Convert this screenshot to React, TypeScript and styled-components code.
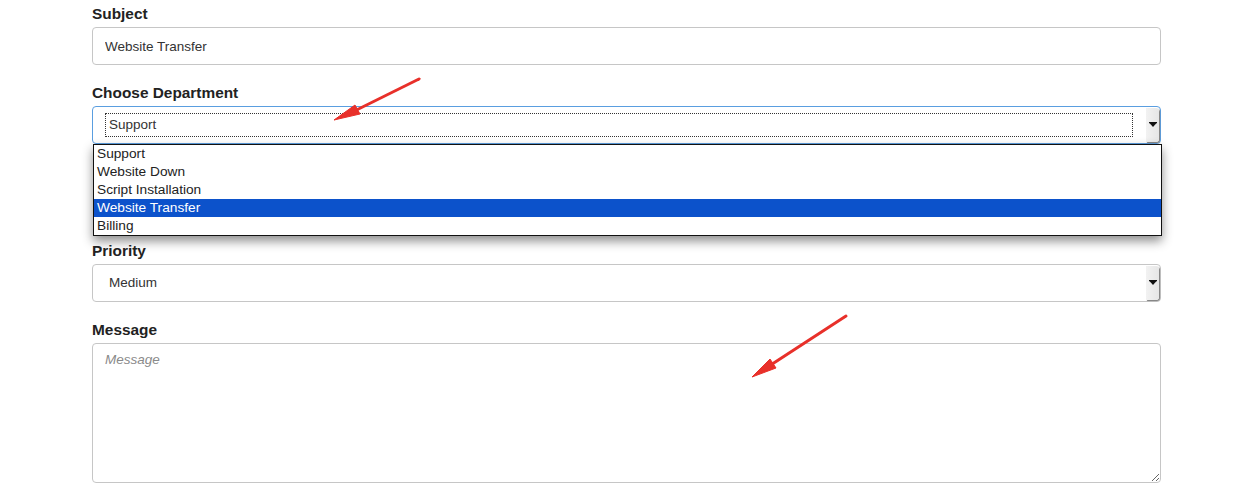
import React from "react";
import styled, { createGlobalStyle } from "styled-components";

const GlobalStyle = createGlobalStyle`
	html, body {
		margin: 0;
		padding: 0;
		background: #fff;
	}
	body {
		font-family: "Liberation Sans", Arial, sans-serif;
		color: #222;
	}
`;

const colors = {
	label: "#222",
	border: "#c6c6c6",
	focus: "#5a9ee0",
	highlight: "#0c52cb",
	arrow: "#e8302a",
	placeholder: "#8a8a8a",
};

const Page = styled.div`
	position: relative;
	width: 1247px;
	height: 494px;
	overflow: hidden;
`;

const Form = styled.form`
	width: 1069px;
	padding: 4px 0 0 92px;
`;

// $covered: room for the row that the open drop-down list lies over
const Field = styled.div<{ $covered?: boolean }>`
	margin-bottom: ${({ $covered }) => ($covered ? "97px" : "18px")};
`;

const Label = styled.label`
	display: block;
	font-size: 15.4px;
	font-weight: bold;
	line-height: 20px;
	color: ${colors.label};
	margin-bottom: 3px;
`;

const TextInput = styled.input`
	box-sizing: border-box;
	display: block;
	width: 100%;
	height: 38px;
	padding: 0 12px;
	border: 1px solid ${colors.border};
	border-radius: 4px;
	font-family: inherit;
	font-size: 13.5px;
	color: #333;
	outline: none;
`;

const SelectBox = styled.div<{ $focused?: boolean }>`
	position: relative;
	box-sizing: border-box;
	display: flex;
	align-items: center;
	height: 38px;
	border: 1px solid ${({ $focused }) => ($focused ? colors.focus : colors.border)};
	border-radius: 4px;
	background: #fff;
`;

const SelectValue = styled.div<{ $focused?: boolean }>`
	flex: 1;
	box-sizing: border-box;
	height: 24px;
	margin: 0 13px 0 12px;
	padding-left: 3px;
	border: 1px dotted ${({ $focused }) => ($focused ? "#333" : "transparent")};
	font-size: 13.5px;
	line-height: 22px;
	color: #333;
`;

const ArrowButton = styled.div`
	width: 13px;
	height: 34px;
	margin-right: 1px;
	display: flex;
	align-items: center;
	justify-content: center;
	background: linear-gradient(to right, #f2f2f2, #e6e6e6);
	border-radius: 0 3px 3px 0;
	box-shadow: 1px 1px 1px #7a7a7a;
`;

const DropList = styled.ul`
	position: absolute;
	top: 37px;
	left: 0;
	width: 1069px;
	box-sizing: border-box;
	margin: 0;
	padding: 0;
	list-style: none;
	background: #fff;
	border: 1px solid #111;
	box-shadow: 0 5px 10px rgba(0, 0, 0, 0.45);
	z-index: 2;
`;

const Option = styled.li<{ $active?: boolean }>`
	height: 18px;
	padding-left: 3px;
	font-size: 13.7px;
	line-height: 18px;
	color: ${({ $active }) => ($active ? "#fff" : "#222")};
	background: ${({ $active }) => ($active ? colors.highlight : "transparent")};
`;

const TextArea = styled.textarea`
	box-sizing: border-box;
	display: block;
	width: 100%;
	height: 140px;
	padding: 8px 12px;
	border: 1px solid ${colors.border};
	border-radius: 4px;
	font-family: inherit;
	font-size: 13.5px;
	color: #333;
	outline: none;
	resize: both;

	&::placeholder {
		font-style: italic;
		color: ${colors.placeholder};
	}
`;

const Annotations = styled.svg`
	position: absolute;
	left: 0;
	top: 0;
	pointer-events: none;
	z-index: 5;
`;

const SelectArrow = () => (
	<svg width="8" height="6" viewBox="0 0 8 6">
		<path d="M0 0.5h8L4 5z" fill="#111" />
		<rect x="0" y="0" width="8" height="1.2" fill="#111" />
	</svg>
);

const departments = ["Support", "Website Down", "Script Installation", "Website Transfer", "Billing"];

const Arrow = ({ tail, tip, wing1, wing2 }: { tail: number[]; tip: number[]; wing1: number[]; wing2: number[] }) => {
	const base = [(wing1[0] + wing2[0]) / 2, (wing1[1] + wing2[1]) / 2];
	return (
		<g fill={colors.arrow} stroke={colors.arrow}>
			<line x1={tail[0]} y1={tail[1]} x2={base[0]} y2={base[1]} strokeWidth="3" strokeLinecap="round" />
			<polygon points={`${tip.join(",")} ${wing1.join(",")} ${wing2.join(",")}`} strokeWidth="1" strokeLinejoin="round" />
		</g>
	);
};

export default function App() {
	return (
		<Page>
			<GlobalStyle />
			<Form onSubmit={(e) => e.preventDefault()}>
				<Field>
					<Label>Subject</Label>
					<TextInput defaultValue="Website Transfer" />
				</Field>
				<Field $covered>
					<Label>Choose Department</Label>
					<SelectBox $focused>
						<SelectValue $focused>Support</SelectValue>
						<ArrowButton>
							<SelectArrow />
						</ArrowButton>
						<DropList>
							{departments.map((d) => (
								<Option key={d} $active={d === "Website Transfer"}>
									{d}
								</Option>
							))}
						</DropList>
					</SelectBox>
				</Field>
				<Field>
					<Label>Priority</Label>
					<SelectBox>
						<SelectValue>Medium</SelectValue>
						<ArrowButton>
							<SelectArrow />
						</ArrowButton>
					</SelectBox>
				</Field>
				<Field>
					<Label>Message</Label>
					<TextArea placeholder="Message" />
				</Field>
			</Form>
			<Annotations width="1247" height="494">
				<Arrow tail={[419, 79]} tip={[334, 120]} wing1={[355, 105]} wing2={[360, 114]} />
				<Arrow tail={[846, 316]} tip={[752, 377]} wing1={[770, 359]} wing2={[776, 368]} />
			</Annotations>
		</Page>
	);
}
